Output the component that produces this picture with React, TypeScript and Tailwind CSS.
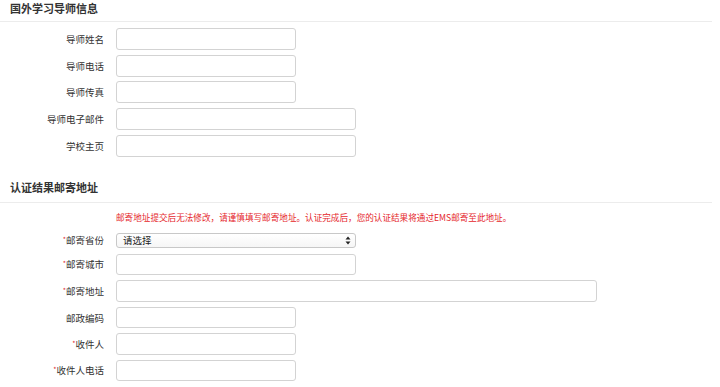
import React from "react";

const font = { fontFamily: '"Noto Sans CJK SC", "Noto Sans", sans-serif' };

function Label({ text, required }: { text: string; required?: boolean }) {
  return (
    <div className="w-[104px] shrink-0 text-right text-[9.5px] leading-[12px] text-[#333]">
      {required && <span className="relative -top-[2px] text-[7px] text-[#e0282e]">*</span>}
      {text}
    </div>
  );
}

function Row({ label, width, required, h = "h-[22px]" }: { label: string; width: string; required?: boolean; h?: string }) {
  return (
    <div className="flex items-center gap-[12px]">
      <Label text={label} required={required} />
      <div className={`${width} ${h} rounded-[3px] border border-[#d3d3d3] bg-white`} />
    </div>
  );
}

export default function App() {
  return (
    <div className="min-h-[387px] w-[720px] bg-white" style={font}>
      <div className="w-[712px]">
        <div className="h-[22px] border-b border-[#ececec] pl-[10px] text-[11px] font-bold leading-[16px] text-[#333]">
          国外学习导师信息
        </div>
        <div className="flex flex-col gap-[4.7px] pt-[6px]">
          <Row label="导师姓名" width="w-[180px]" />
          <Row label="导师电话" width="w-[180px]" />
          <Row label="导师传真" width="w-[180px]" />
          <Row label="导师电子邮件" width="w-[240px]" />
          <Row label="学校主页" width="w-[240px]" />
        </div>
        <div className="mt-[22px] h-[24px] border-b border-[#ececec] pl-[10px] text-[11px] font-bold leading-[16px] text-[#333]">
          认证结果邮寄地址
        </div>
        <div className="pl-[116px] pt-[8px] text-[8.6px] leading-[12px] text-[#e5262b]">
          邮寄地址提交后无法修改，请谨慎填写邮寄地址。认证完成后，您的认证结果将通过EMS邮寄至此地址。
        </div>
        <div className="mt-[10px] flex items-center gap-[12px]">
          <Label text="邮寄省份" required />
          <div className="flex h-[15px] w-[240px] items-center justify-between rounded-[3px] border border-[#c8c8c8] bg-gradient-to-b from-white to-[#f6f6f6] pl-[6px] pr-[4px] text-[9.5px] text-[#222]">
            <span>请选择</span>
            <svg width="6" height="9" viewBox="0 0 6 9">
              <path d="M0.5 3.6 L3 0.6 L5.5 3.6 Z" fill="#222" />
              <path d="M0.5 5.4 L3 8.4 L5.5 5.4 Z" fill="#222" />
            </svg>
          </div>
        </div>
        <div className="mt-[6px] flex flex-col gap-[5px]">
          <Row label="邮寄城市" width="w-[240px]" required h="h-[21.5px]" />
          <Row label="邮寄地址" width="w-[481px]" required h="h-[21.5px]" />
          <Row label="邮政编码" width="w-[180px]" h="h-[21.5px]" />
          <Row label="收件人" width="w-[180px]" required h="h-[21.5px]" />
          <Row label="收件人电话" width="w-[180px]" required h="h-[21.5px]" />
        </div>
      </div>
    </div>
  );
}
